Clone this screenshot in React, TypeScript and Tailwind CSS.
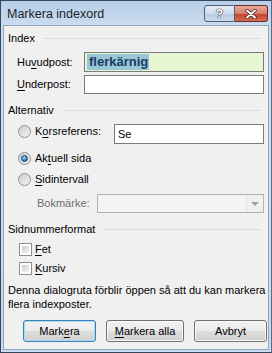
import React from "react";

const font = { fontFamily: '"Liberation Sans", Arial, sans-serif' };

function U({ children }: { children: React.ReactNode }) {
  return <span className="underline underline-offset-2">{children}</span>;
}

function Section({ title }: { title: string }) {
  return (
    <div className="flex items-center h-[14px] gap-2">
      <span className="text-[#000000]">{title}</span>
      <div className="flex-1 h-px bg-[#d5dfe5] mr-[7px]" />
    </div>
  );
}

function Radio({ checked }: { checked?: boolean }) {
  return (
    <div className="w-[13px] h-[13px] rounded-full border border-[#8e8f8f] bg-gradient-to-br from-[#cbcbcb] to-[#f6f6f6] flex items-center justify-center shrink-0">
      {checked && (
        <div className="w-[7px] h-[7px] rounded-full border border-[#0c4a79] bg-[radial-gradient(circle_at_40%_35%,#a9dcf9,#2c7cc1_60%,#0e4f86)]" />
      )}
    </div>
  );
}

function Check() {
  return (
    <div className="w-[13px] h-[13px] border border-[#8e8f8f] bg-white p-[2px] shrink-0">
      <div className="w-full h-full bg-gradient-to-br from-[#cbcfd5] to-[#f3f3f3]" />
    </div>
  );
}

function Btn({ children, def, wide }: { children: React.ReactNode; def?: boolean; wide?: boolean }) {
  return (
    <div
      className={`h-[22px] ${wide ? "w-[78px]" : "w-[73px]"} rounded-[3px] border flex items-center justify-center ${
        def
          ? "border-[#3c7fb1] shadow-[inset_0_0_0_1px_#a6dcf5]"
          : "border-[#707070] shadow-[inset_0_0_0_1px_#fbfbfb]"
      } bg-[linear-gradient(#f2f2f2_0%,#ebebeb_50%,#dddddd_51%,#cfcfcf_100%)]`}
    >
      {children}
    </div>
  );
}

export default function App() {
  return (
    <div
      className="w-[272px] h-[353px] bg-[linear-gradient(#b7cfe9,#cddef0_30px,#c9dbef)] border border-[#34465c] border-r-[#5a6c82] text-[11px] text-black flex flex-col overflow-hidden"
      style={font}
    >
      {/* title bar */}
      <div className="h-[24px] flex items-start pl-[6px] pr-[3px] pt-[4px] shrink-0">
        <span className="text-[12.5px] leading-[18px] flex-1 text-[#1e1e1e]">Markera indexord</span>
        <div className="flex">
          <div className="w-[31px] h-[17px] rounded-l-[3px] border border-[#4f6079] bg-[linear-gradient(#e4edf7,#cfdcec_50%,#b8cbe2_51%,#c9d9ec)] flex items-center justify-center">
            <span
              className="text-[12px] font-bold leading-none text-white"
              style={{ textShadow: "0 0 1px #333, 0 0 1px #333, 0 0 1px #333" }}
            >
              ?
            </span>
          </div>
          <div className="w-[33px] h-[17px] rounded-r-[3px] border border-l-0 border-[#6b2a22] bg-[linear-gradient(#e9a99b,#d57f6a_50%,#c2432b_51%,#d46c51)] flex items-center justify-center">
            <svg width="12" height="10" viewBox="0 0 12 10">
              <path d="M2 1.5 L10 8.5 M10 1.5 L2 8.5" stroke="#3a1a14" strokeWidth="3.4" strokeLinecap="round" />
              <path d="M2 1.5 L10 8.5 M10 1.5 L2 8.5" stroke="#ffffff" strokeWidth="2" strokeLinecap="round" />
            </svg>
          </div>
        </div>
      </div>

      {/* content */}
      <div className="flex-1 mx-[2px] mb-[2px] bg-[#f0f0f0] border border-[#8ea5bf] flex flex-col pl-[4px] pt-[5px]">
        <Section title="Index" />
        <div className="flex items-center mt-[7px] h-[20px]">
          <span className="w-[76px] pl-[9px]">
            Hu<U>v</U>udpost:
          </span>
          <div className="w-[180px] h-[20px] border border-[#7a7a7a] bg-[#e6f5d2] flex items-center px-[2px]">
            <span className="bg-[#99c7d6] text-[#1b3a66] font-bold text-[13px] leading-[16px] pl-[2px] pr-[1px]">
              flerkärnig
            </span>
          </div>
        </div>
        <div className="flex items-center mt-[3px] h-[19px]">
          <span className="w-[76px] pl-[9px]">
            <U>U</U>nderpost:
          </span>
          <div className="w-[180px] h-[19px] border border-[#7a7a7a] bg-white" />
        </div>

        <div className="mt-[9px]">
          <Section title="Alternativ" />
        </div>
        <div className="flex items-center mt-[7px] h-[20px]">
          <div className="w-[106px] pl-[10px] flex items-center gap-[4px] -mt-[5px]">
            <Radio />
            <span>
              K<U>o</U>rsreferens:
            </span>
          </div>
          <div className="w-[150px] h-[20px] border border-[#7a7a7a] bg-white flex items-center px-[3px]">
            <span>Se</span>
          </div>
        </div>
        <div className="flex items-center h-[20px] mt-[4px] pl-[10px] gap-[4px]">
          <Radio checked />
          <span>
            Ak<U>t</U>uell sida
          </span>
        </div>
        <div className="flex items-center h-[20px] mt-[1px] pl-[10px] gap-[4px]">
          <Radio />
          <span>
            <U>S</U>idintervall
          </span>
        </div>
        <div className="flex items-center mt-[5px] h-[19px]">
          <span className="w-[89px] pl-[29px] text-[#6d6d6d]">Bokmärke:</span>
          <div className="w-[167px] h-[19px] border border-[#adb2b5] bg-[#f4f4f4] flex justify-end">
            <div className="w-[17px] h-full border-l border-[#e2e2e2] bg-[#f0f0f0] flex items-center justify-center">
              <div className="w-0 h-0 border-l-[4px] border-r-[4px] border-t-[4px] border-l-transparent border-r-transparent border-t-[#a0a0a0]" />
            </div>
          </div>
        </div>

        <div className="mt-[9px]">
          <Section title="Sidnummerformat" />
        </div>
        <div className="flex items-center h-[18px] mt-[4px] pl-[11px] gap-[3px]">
          <Check />
          <span>
            <U>F</U>et
          </span>
        </div>
        <div className="flex items-center h-[18px] mt-[1px] pl-[11px] gap-[3px]">
          <Check />
          <span>
            <U>K</U>ursiv
          </span>
        </div>

        <p className="mt-[6px] leading-[14px]">
          Denna dialogruta förblir öppen så att du kan markera flera indexposter.
        </p>

        <div className="flex mt-[9px] pl-[15px] gap-[10px]">
          <Btn def>
            Mark<U>e</U>ra
          </Btn>
          <Btn wide>
            <U>M</U>arkera alla
          </Btn>
          <Btn>Avbryt</Btn>
        </div>
      </div>
    </div>
  );
}
